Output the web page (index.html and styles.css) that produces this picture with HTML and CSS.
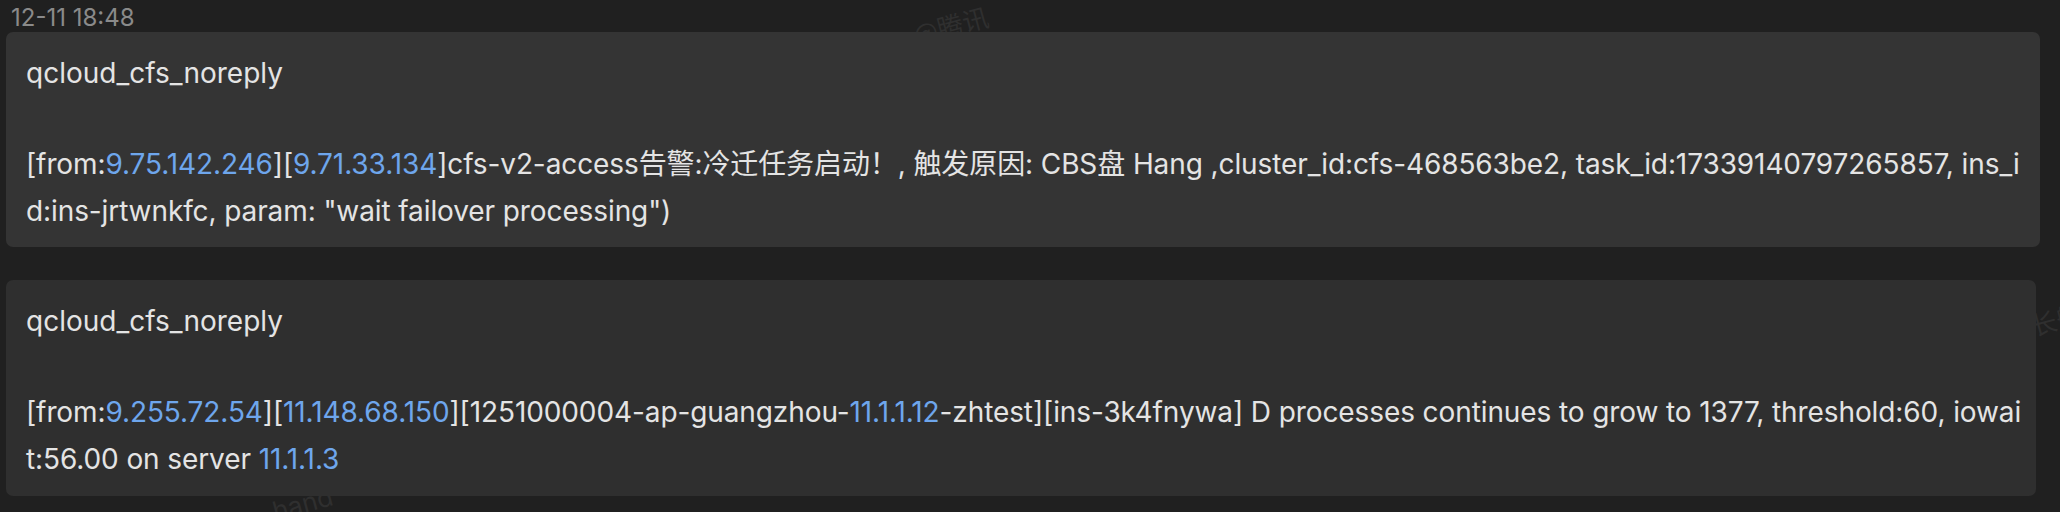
FILE: index.html
```html
<!DOCTYPE html>
<html lang="zh-CN">
<head>
<meta charset="utf-8">
<title>消息</title>
<link rel="stylesheet" href="styles.css">
</head>
<body>
<div class="watermarks" aria-hidden="true">
  <span class="wm wm-top">@腾讯</span>
  <span class="wm wm-right">长舰</span>
  <span class="wm wm-bottom">hand</span>
</div>
<div class="time">12-11 18:48</div>
<div class="card card-active">
  <div class="title">qcloud_cfs_noreply</div>
  <div class="blank"></div>
  <div class="line">[from:<a class="ip">9.75.142.246</a>][<a class="ip">9.71.33.134</a>]cfs-v2-access告警:冷迁任务启动！, 触发原因: CBS盘 Hang ,cluster_id:cfs-468563be2, task_id:17339140797265857, ins_i</div>
  <div class="line">d:ins-jrtwnkfc, param: "wait failover processing")</div>
</div>
<div class="card">
  <div class="title">qcloud_cfs_noreply</div>
  <div class="blank"></div>
  <div class="line">[from:<a class="ip">9.255.72.54</a>][<a class="ip">11.148.68.150</a>][1251000004-ap-guangzhou-<a class="ip">11.1.1.12</a>-zhtest][ins-3k4fnywa] D processes continues to grow to 1377, threshold:60, iowai</div>
  <div class="line">t:56.00 on server <a class="ip">11.1.1.3</a></div>
</div>
</body>
</html>
```
FILE: styles.css
```css
html, body {
  margin: 0;
  padding: 0;
}
body {
  background: #202020;
  font-family: "Inter", "Noto Sans CJK SC", sans-serif;
  color: #e4e4e4;
  width: 2060px;
  height: 512px;
  overflow: hidden;
}
.watermarks {
  position: absolute;
  inset: 0;
  z-index: -1;
  pointer-events: none;
}
.wm {
  position: absolute;
  color: #2f2f2f;
  font-size: 26px;
  font-family: "Noto Sans CJK SC", sans-serif;
  transform: rotate(-15deg);
  white-space: nowrap;
}
.wm-top { left: 912px; top: 6px; }
.wm-right { left: 2030px; top: 300px; }
.wm-bottom { left: 272px; top: 488px; font-family: "Inter", sans-serif; }
.time {
  box-sizing: border-box;
  height: 32px;
  padding-top: 3px;
  line-height: 29px;
  padding-left: 11px;
  font-size: 24px;
  color: #8a8a8a;
}
.card {
  margin: 0 24px 33px 6px;
  padding: 19px 0 13px 20px;
  background: #2f2f2f;
  border-radius: 7px;
  font-size: 28px;
}
.card-active {
  margin-right: 20px;
  background: #343434;
}
.title {
  line-height: 45px;
  white-space: nowrap;
}
.blank {
  height: 45px;
}
.line {
  line-height: 46.7px;
  white-space: nowrap;
  letter-spacing: -0.1px;
}
.ip {
  color: #6ea6ec;
  text-decoration: none;
}
```
